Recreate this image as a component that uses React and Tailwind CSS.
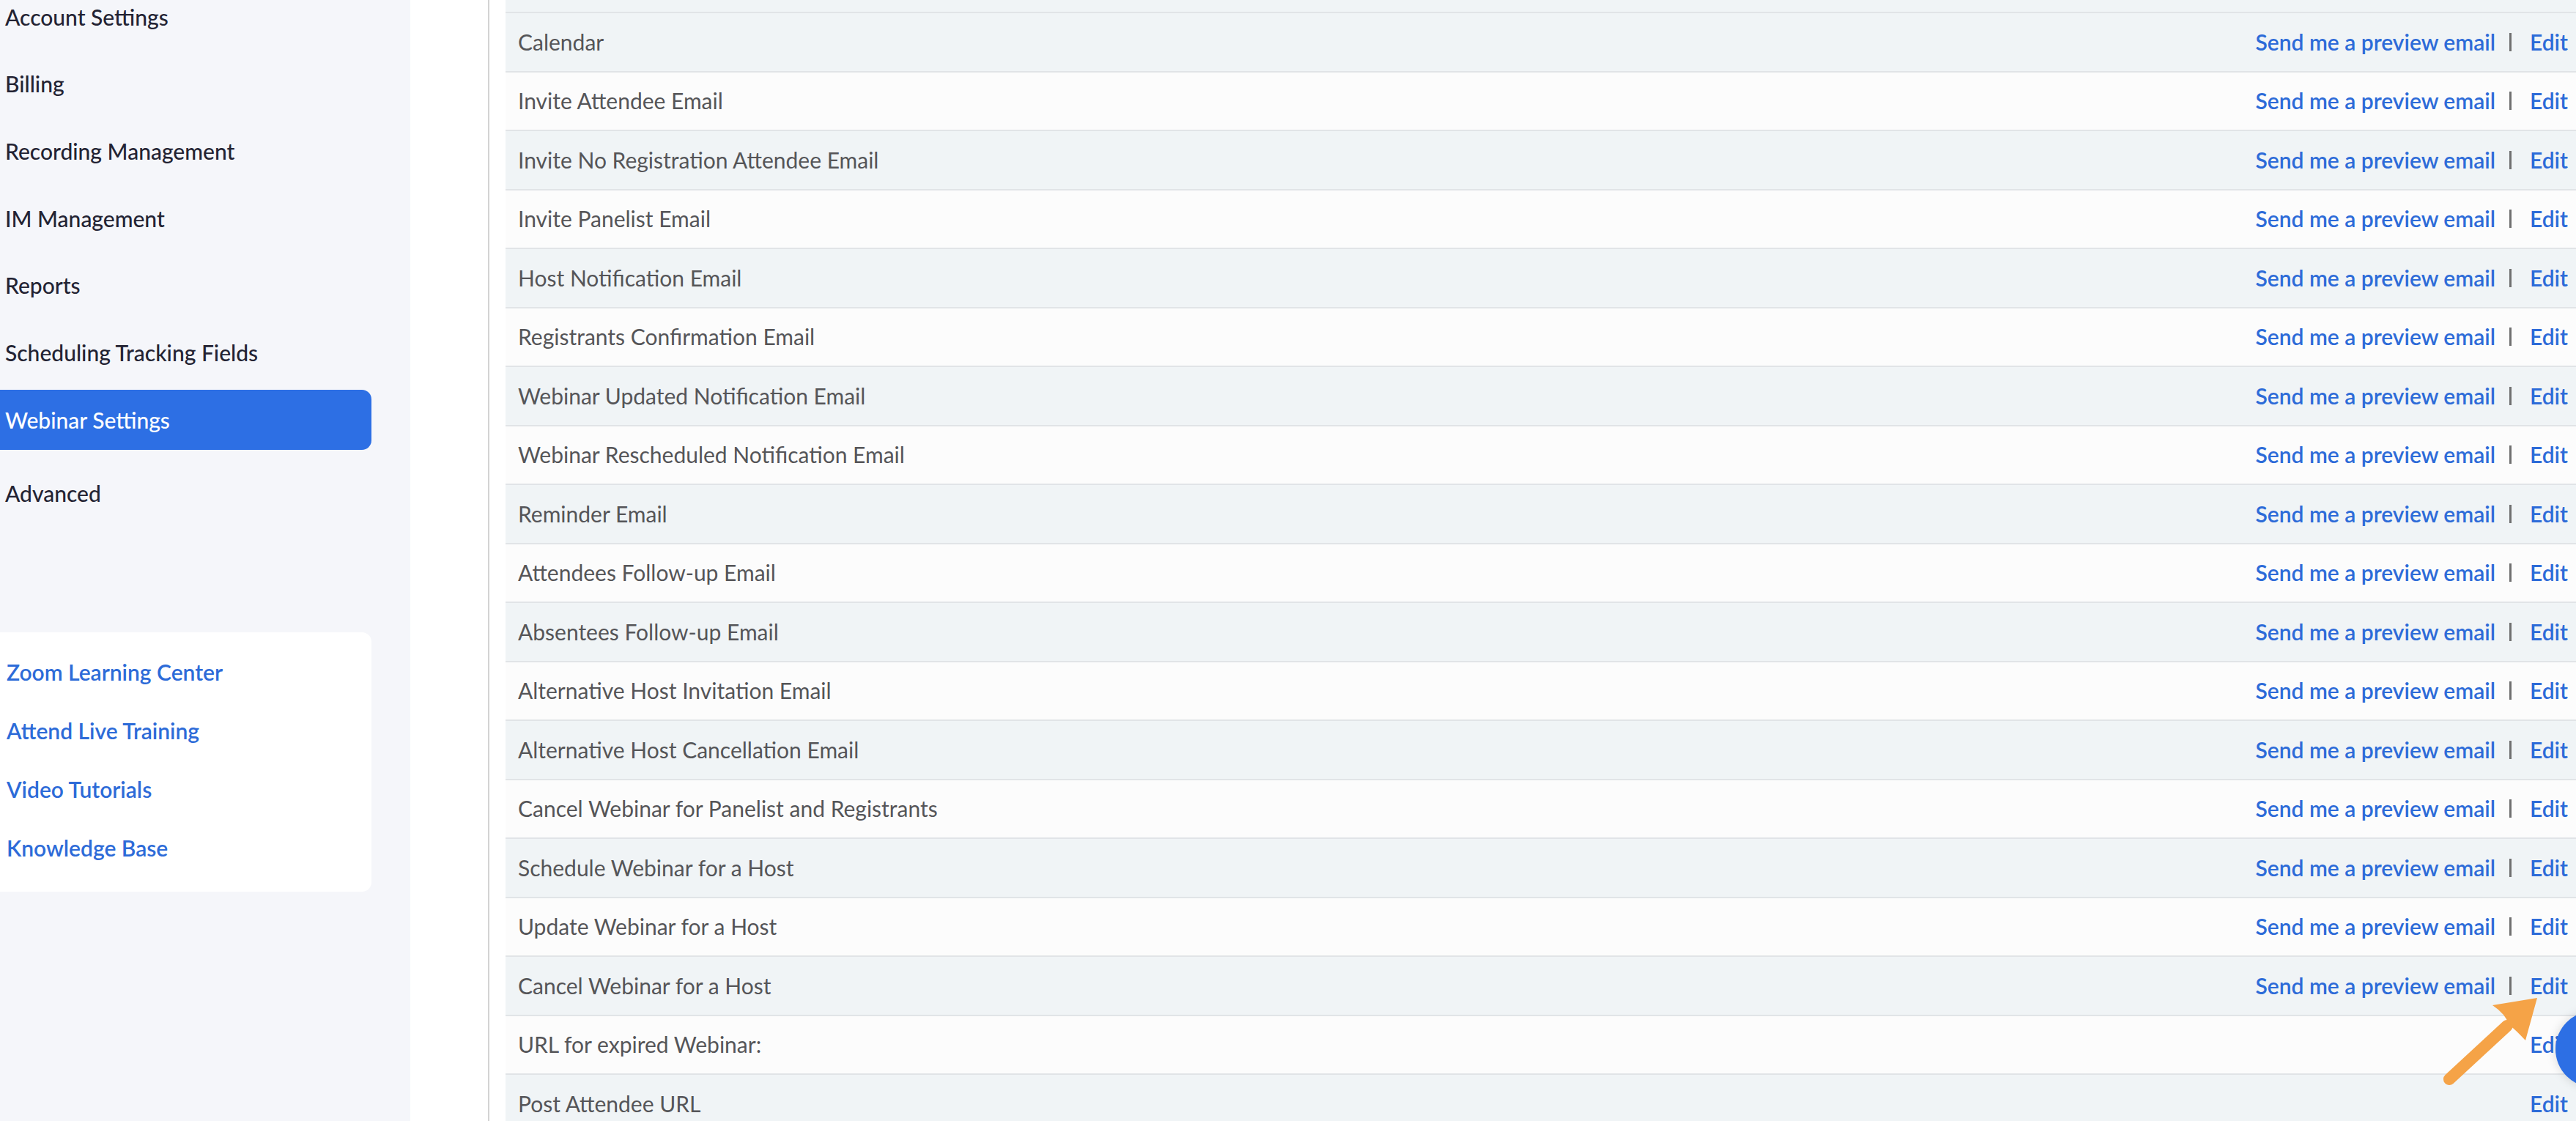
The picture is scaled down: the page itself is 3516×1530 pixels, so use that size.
import React from 'react';

const navItems = [
    'Account Settings',
    'Billing',
    'Recording Management',
    'IM Management',
    'Reports',
    'Scheduling Tracking Fields',
    'Webinar Settings',
];

const helpLinks = ['Zoom Learning Center', 'Attend Live Training', 'Video Tutorials', 'Knowledge Base'];

const templates = [
    { name: 'Calendar', preview: true },
    { name: 'Invite Attendee Email', preview: true },
    { name: 'Invite No Registration Attendee Email', preview: true },
    { name: 'Invite Panelist Email', preview: true },
    { name: 'Host Notification Email', preview: true },
    { name: 'Registrants Confirmation Email', preview: true },
    { name: 'Webinar Updated Notification Email', preview: true },
    { name: 'Webinar Rescheduled Notification Email', preview: true },
    { name: 'Reminder Email', preview: true },
    { name: 'Attendees Follow-up Email', preview: true },
    { name: 'Absentees Follow-up Email', preview: true },
    { name: 'Alternative Host Invitation Email', preview: true },
    { name: 'Alternative Host Cancellation Email', preview: true },
    { name: 'Cancel Webinar for Panelist and Registrants', preview: true },
    { name: 'Schedule Webinar for a Host', preview: true },
    { name: 'Update Webinar for a Host', preview: true },
    { name: 'Cancel Webinar for a Host', preview: true },
    { name: 'URL for expired Webinar:', preview: false },
    { name: 'Post Attendee URL', preview: false },
];

const Sidebar = () => (
    <aside className="w-[560px] shrink-0 bg-[#f5f6fa] pr-[53px]">
        <nav className="-mt-[18px] flex flex-col gap-[9.7px]">
            {navItems.map((item) => (
                <a
                    key={item}
                    href="#"
                    className={
                        item === 'Webinar Settings'
                            ? 'flex h-[82px] items-center rounded-r-[13px] bg-[#2d6fe4] pl-[7px] text-[30px] font-medium text-white'
                            : 'flex h-[82px] items-center pl-[7px] text-[30px] font-medium text-[#232333]'
                    }
                >
                    {item}
                </a>
            ))}
            <a href="#" className="mt-[9px] flex h-[82px] items-center pl-[7px] text-[30px] font-medium text-[#232333]">
                Advanced
            </a>
        </nav>

        <div className="mt-[148px] flex h-[354px] flex-col gap-[36px] rounded-r-[13px] bg-white pl-[9px] pt-[32px]">
            {helpLinks.map((link) => (
                <a key={link} href="#" className="text-[30px] font-semibold leading-[44px] text-[#2d6bd8]">
                    {link}
                </a>
            ))}
        </div>
    </aside>
);

const TemplateRow = ({ template, index }) => (
    <div
        className={`flex h-[80.5px] shrink-0 items-center justify-between border-t-2 border-[#e1e4e7] pl-[17px] pr-[11px] ${
            index % 2 === 0 ? 'bg-[#f0f4f6]' : 'bg-[#fcfcfc]'
        }`}
    >
        <span className="text-[30px] text-[#555558]">{template.name}</span>
        <div className="flex items-center text-[30px] font-semibold text-[#2d6bd8]">
            {template.preview && (
                <>
                    <a href="#">Send me a preview email</a>
                    <span className="ml-[19px] mr-[25px] h-[25px] w-[3px] bg-[#707070]"></span>
                </>
            )}
            <a href="#">Edit</a>
        </div>
    </div>
);

const App = () => {
    return (
        <div className="relative flex h-[1530px] w-[3516px] overflow-hidden bg-white font-['Lato',sans-serif]">
            <Sidebar />

            <main className="flex flex-1 pl-[106px]">
                <div className="flex flex-1 flex-col border-l-2 border-[#d3d3d3] pl-[22px]">
                    <div className="h-[16px] shrink-0 bg-[#f0f4f6]"></div>
                    {templates.map((template, i) => (
                        <TemplateRow key={template.name} template={template} index={i} />
                    ))}
                </div>
            </main>

            {/* annotation arrow pointing at the Edit link */}
            <svg className="absolute left-[3320px] top-[1340px]" width="170" height="150" viewBox="0 0 170 150">
                <line x1="23" y1="133" x2="102" y2="60" stroke="#f5a347" strokeWidth="16" strokeLinecap="round" />
                <path d="M143 22 L82 32 Q100 44 104 58 Q114 66 127 80 Z" fill="#f5a347" />
            </svg>

            {/* floating help button */}
            <div className="absolute left-[3488px] top-[1380px] h-[104px] w-[104px] rounded-full bg-[#2d6fe4] shadow-[0_0_14px_rgba(0,0,0,0.15)]"></div>
        </div>
    );
};

export default App;
